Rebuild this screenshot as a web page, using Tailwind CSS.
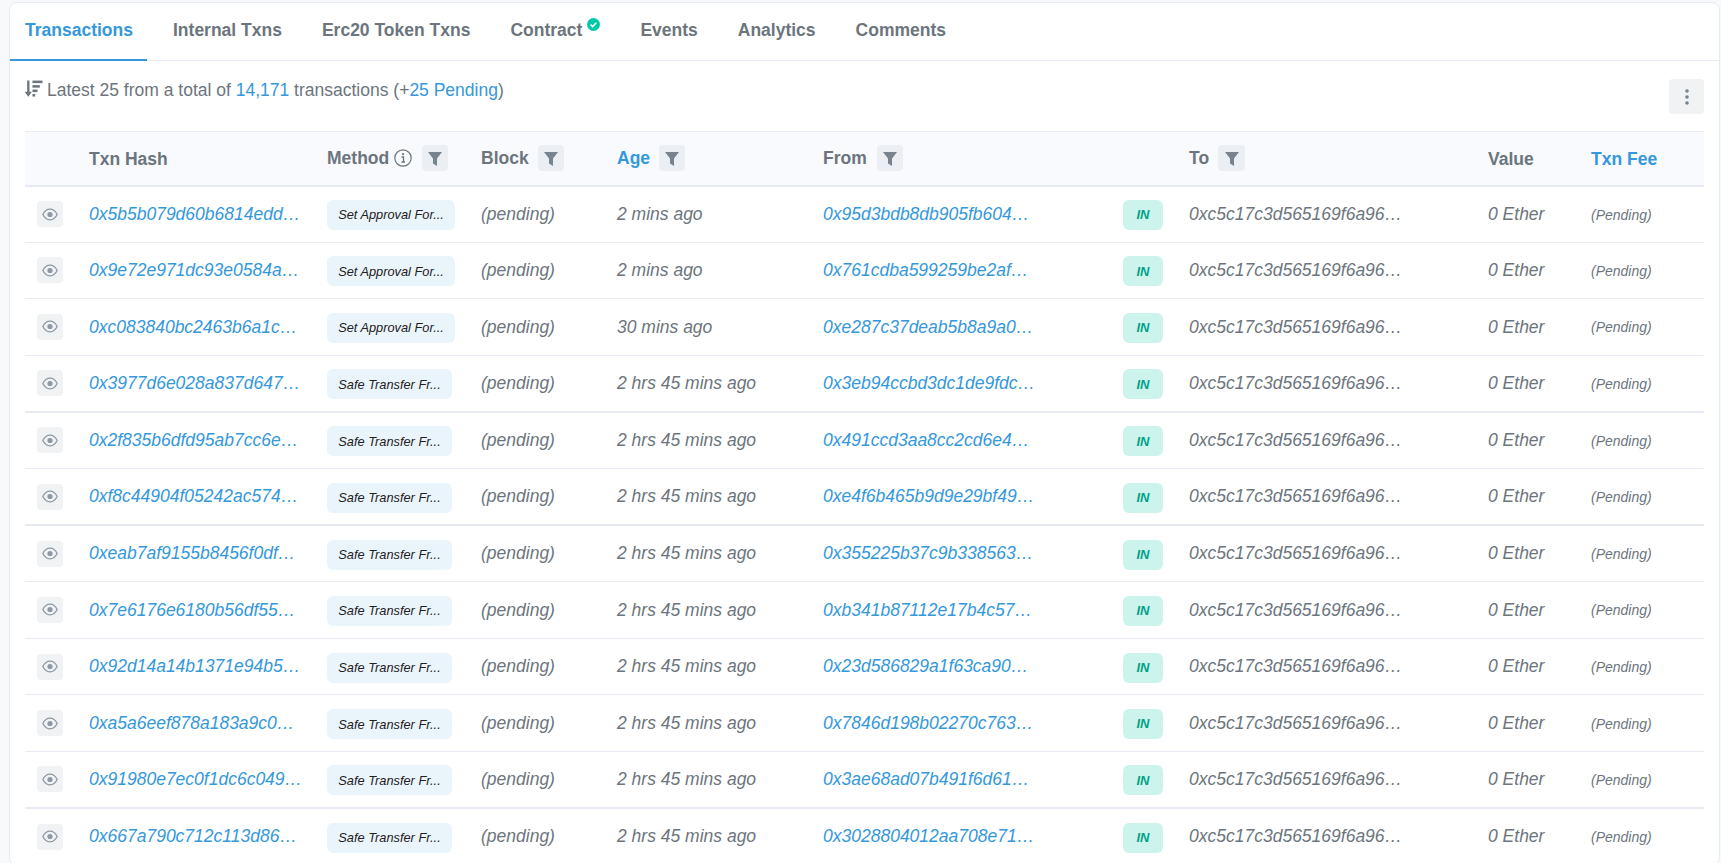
<!DOCTYPE html>
<html lang="en">
<head>
  <meta charset="UTF-8" />
  <title>Transactions</title>
  <script src="https://cdn.jsdelivr.net/npm/@tailwindcss/browser@4"></script>
</head>
<body class="bg-[#f8f9fa] font-['Liberation_Sans',sans-serif] text-[#6c757d] h-[863px] overflow-hidden">
  <div class="ml-[9px] mt-[2px] mr-px bg-white border border-[#e7eaf3] rounded-lg">
    <!-- Tabs -->
    <nav class="flex h-[58px] border-b border-[#e7eaf3] text-[17.5px] font-bold">
      <a class="flex items-center justify-center w-[137px] pb-[2px] pl-px text-[#3498db] border-b-2 border-[#3498db] h-[58px]">Transactions</a>
      <a class="flex items-center pl-[26px] pr-[20px] pb-[2px]">Internal Txns</a>
      <a class="flex items-center px-[20px] pb-[2px]">Erc20 Token Txns</a>
      <a class="flex items-center px-[20px] pb-[2px]">Contract
        <svg class="w-[13px] h-[13px] ml-[5px] mb-[12px]" viewBox="0 0 16 16"><circle cx="8" cy="8" r="8" fill="#00c9a7"/><path d="M4.5 8.2l2.4 2.4 4.6-4.8" fill="none" stroke="#fff" stroke-width="2"/></svg>
      </a>
      <a class="flex items-center px-[20px] pb-[2px]">Events</a>
      <a class="flex items-center px-[20px] pb-[2px]">Analytics</a>
      <a class="flex items-center px-[20px] pb-[2px]">Comments</a>
    </nav>

    <div class="pl-[15px] pr-[15px]">
      <div class="flex justify-between h-[70px] pt-[18px]">
        <p class="flex items-start text-[17.5px] leading-[26px] -mt-[2px]">
          <svg class="w-[19px] h-[19px] mr-[4px] mt-[2px] -ml-px" viewBox="0 0 18 18" fill="#6c757d"><path d="M3 1.5h2.2v10.5h2.3L4.1 16.8.6 12H3z"/><rect x="8" y="1.5" width="9.5" height="2.4"/><rect x="8" y="5.8" width="7" height="2.4"/><rect x="8" y="10" width="4.8" height="2.4"/><rect x="8" y="14.2" width="2.6" height="2.4"/></svg>
          Latest 25 from a total of&nbsp;<a class="text-[#3498db]">14,171</a>&nbsp;transactions (+<a class="text-[#3498db]">25 Pending</a>)
        </p>
        <button class="flex items-center justify-center w-[35px] h-[35px] rounded bg-[#f1f2f4]">
          <svg class="w-[4px] h-[16px]" viewBox="0 0 4 16" fill="#77838f"><circle cx="2" cy="2" r="1.8"/><circle cx="2" cy="8" r="1.8"/><circle cx="2" cy="14" r="1.8"/></svg>
        </button>
      </div>

      <table class="w-full table-fixed border-collapse text-[17.5px]">
        <colgroup>
          <col class="w-[64px]"><col class="w-[238px]"><col class="w-[154px]"><col class="w-[136px]"><col class="w-[206px]"><col class="w-[300px]"><col class="w-[66px]"><col class="w-[299px]"><col class="w-[103px]"><col>
        </colgroup>
        <thead class="bg-[#f8fafd]">
          <tr class="h-[54px] border-y border-b-2 border-[#e7eaf3] text-left">
            <th></th>
            <th class="font-bold pt-[2px]">Txn Hash</th>
            <th class="font-bold">
              <div class="flex items-center">Method
                <svg class="w-[18px] h-[18px] ml-[5px] mr-[10px]" viewBox="0 0 18 18" fill="none" stroke="#6c757d"><circle cx="9" cy="9" r="8.2" stroke-width="1.2"/><path d="M7.5 8h2v5M7.5 13h3.5" stroke-width="1.3"/><circle cx="9" cy="5.2" r="1.1" fill="#6c757d" stroke="none"/></svg>
                <span class="flex items-center justify-center w-[26px] h-[26px] rounded bg-[#ebeef2]"><svg class="w-[14px] h-[15px]" viewBox="0 0 14 15" fill="#77838f"><path d="M0 1h14L9 7.5V15l-4-2.5V7.5z"/></svg></span>
              </div>
            </th>
            <th class="font-bold">
              <div class="flex items-center">Block
                <span class="flex items-center justify-center w-[26px] h-[26px] ml-[9px] rounded bg-[#ebeef2]"><svg class="w-[14px] h-[15px]" viewBox="0 0 14 15" fill="#77838f"><path d="M0 1h14L9 7.5V15l-4-2.5V7.5z"/></svg></span>
              </div>
            </th>
            <th class="font-bold">
              <div class="flex items-center text-[#3498db]">Age
                <span class="flex items-center justify-center w-[26px] h-[26px] ml-[9px] rounded bg-[#ebeef2]"><svg class="w-[14px] h-[15px]" viewBox="0 0 14 15" fill="#77838f"><path d="M0 1h14L9 7.5V15l-4-2.5V7.5z"/></svg></span>
              </div>
            </th>
            <th class="font-bold">
              <div class="flex items-center">From
                <span class="flex items-center justify-center w-[26px] h-[26px] ml-[10px] rounded bg-[#ebeef2]"><svg class="w-[14px] h-[15px]" viewBox="0 0 14 15" fill="#77838f"><path d="M0 1h14L9 7.5V15l-4-2.5V7.5z"/></svg></span>
              </div>
            </th>
            <th></th>
            <th class="font-bold">
              <div class="flex items-center">To
                <span class="flex items-center justify-center w-[27px] h-[26px] ml-[9px] rounded bg-[#ebeef2]"><svg class="w-[14px] h-[15px]" viewBox="0 0 14 15" fill="#77838f"><path d="M0 1h14L9 7.5V15l-4-2.5V7.5z"/></svg></span>
              </div>
            </th>
            <th class="font-bold pt-[2px]">Value</th>
            <th class="font-bold pt-[2px] text-[#3498db]">Txn Fee</th>
          </tr>
        </thead>
        <tbody id="rows"></tbody>
      </table>
    </div>
  </div>

  <script>
    const SET = 'Set Approval For...';
    const SAFE = 'Safe Transfer Fr...';
    const LONG = '2 hrs 45 mins ago';
    const rows = [
      ['0x5b5b079d60b6814edd…', SET, '2 mins ago', '0x95d3bdb8db905fb604…'],
      ['0x9e72e971dc93e0584a…', SET, '2 mins ago', '0x761cdba599259be2af…'],
      ['0xc083840bc2463b6a1c…', SET, '30 mins ago', '0xe287c37deab5b8a9a0…'],
      ['0x3977d6e028a837d647…', SAFE, LONG, '0x3eb94ccbd3dc1de9fdc…'],
      ['0x2f835b6dfd95ab7cc6e…', SAFE, LONG, '0x491ccd3aa8cc2cd6e4…'],
      ['0xf8c44904f05242ac574…', SAFE, LONG, '0xe4f6b465b9d9e29bf49…'],
      ['0xeab7af9155b8456f0df…', SAFE, LONG, '0x355225b37c9b338563…'],
      ['0x7e6176e6180b56df55…', SAFE, LONG, '0xb341b87112e17b4c57…'],
      ['0x92d14a14b1371e94b5…', SAFE, LONG, '0x23d586829a1f63ca90…'],
      ['0xa5a6eef878a183a9c0…', SAFE, LONG, '0x7846d198b02270c763…'],
      ['0x91980e7ec0f1dc6c049…', SAFE, LONG, '0x3ae68ad07b491f6d61…'],
      ['0x667a790c712c113d86…', SAFE, LONG, '0x3028804012aa708e71…'],
    ];

    document.getElementById('rows').innerHTML = rows.map((r, i) => `
      <tr class="h-[56.6px] ${[3, 5, 10].includes(i) ? 'border-b-2' : 'border-b'} border-[#e7eaf3] italic">
        <td class="pl-3">
          <span class="flex items-center justify-center w-[26px] h-[26px] rounded bg-[#f1f2f4]">
            <svg class="w-[16px] h-[13px]" viewBox="0 0 16 13" fill="none" stroke="#8c98a4" stroke-width="1.3"><path d="M.8 6.5C2.6 3 5 1.2 8 1.2s5.4 1.8 7.2 5.3c-1.8 3.5-4.2 5.3-7.2 5.3S2.6 10 .8 6.5z"/><circle cx="8" cy="6.5" r="2.6" fill="#8c98a4" stroke="none"/></svg>
          </span>
        </td>
        <td class="text-[#3498db]">${r[0]}</td>
        <td class="pt-[2px]"><span class="inline-flex items-center justify-center h-[30px] ${r[1] === SET ? 'w-[128px]' : 'w-[125px]'} rounded-md bg-[#eaf5fb] text-[#1e2022] text-[12.8px]">${r[1]}</span></td>
        <td>(pending)</td>
        <td>${r[2]}</td>
        <td class="text-[#3498db]">${r[3]}</td>
        <td class="pt-[2px]"><span class="inline-flex items-center justify-center w-[40px] h-[30px] rounded-md bg-[#ccf4ec] text-[#00a186] text-[13px] font-bold">IN</span></td>
        <td>0xc5c17c3d565169f6a96…</td>
        <td>0 Ether</td>
        <td class="text-[14px] pt-[2px]">(Pending)</td>
      </tr>`).join('');
  </script>
</body>
</html>
